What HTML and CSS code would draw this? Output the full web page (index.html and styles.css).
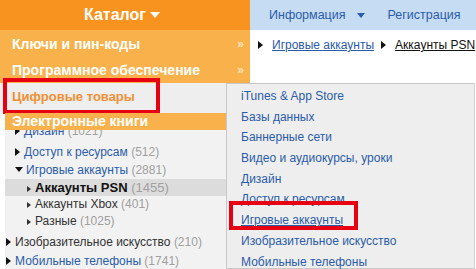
FILE: index.html
```html
<!DOCTYPE html>
<html lang="ru">
<head>
  <meta charset="UTF-8">
  <title>Каталог</title>
  <link rel="stylesheet" href="styles.css">
</head>
<body>
  <div class="page">
    <!-- Top bar -->
    <div class="topbar">
      <div class="catalog">Каталог <span class="caret"></span></div>
      <nav class="topnav">
        <a href="#">Информация <span class="caret-sm"></span></a>
        <a href="#">Регистрация</a>
      </nav>
    </div>

    <div class="midrow">
      <ul class="menu">
        <li>Ключи и пин-коды<span class="raquo">»</span></li>
        <li>Программное обеспечение<span class="raquo">»</span></li>
      </ul>
      <div class="crumbs">
        <span class="arrow"></span><a href="#" class="crumb-link">Игровые аккаунты</a>
        <span class="arrow"></span><a href="#" class="crumb-current">Аккаунты PSN</a>
      </div>
    </div>

    <div class="lower">
      <div class="side">
        <div class="current">Цифровые товары<span class="mark mark-left"></span></div>
        <div class="ebooks">Электронные книги</div>
        <ul class="tree">
          <li class="lvl1"><span class="arrow"></span><a href="#">Дизайн</a> <span class="count">(1021)</span></li>
          <li class="lvl1 gap"><span class="arrow"></span><a href="#">Доступ к ресурсам</a> <span class="count">(512)</span></li>
          <li class="lvl1"><span class="arrow-down"></span><a href="#">Игровые аккаунты</a> <span class="count">(2881)</span></li>
          <li class="lvl2 selected"><span class="arrow small"></span><b>Аккаунты PSN</b> <span class="count">(1455)</span></li>
          <li class="lvl2"><span class="arrow small"></span><span class="dark">Аккаунты Xbox</span> <span class="count">(401)</span></li>
          <li class="lvl2"><span class="arrow small"></span><span class="dark">Разные</span> <span class="count">(1025)</span></li>
          <li class="lvl0 tall"><span class="arrow"></span><span class="dark">Изобразительное искусство</span> <span class="count">(210)</span></li>
          <li class="lvl0"><span class="arrow"></span><a href="#">Мобильные телефоны</a> <span class="count">(1741)</span></li>
        </ul>
      </div>

      <ul class="dropdown">
        <li><a href="#">iTunes &amp; App Store</a></li>
        <li><a href="#">Базы данных</a></li>
        <li><a href="#">Баннерные сети</a></li>
        <li><a href="#">Видео и аудиокурсы, уроки</a></li>
        <li><a href="#">Дизайн</a></li>
        <li><a href="#">Доступ к ресурсам</a></li>
        <li class="marked"><a href="#" class="hover">Игровые аккаунты</a><span class="mark mark-right"></span></li>
        <li><a href="#">Изобразительное искусство</a></li>
        <li><a href="#">Мобильные телефоны</a></li>
      </ul>
    </div>
  </div>
</body>
</html>
```

FILE: styles.css
```css
body {
  margin: 0;
  font-family: "Liberation Sans", Arial, sans-serif;
  font-size: 12px;
  background: #fff;
}

a {
  text-decoration: none;
  color: #2b5ca8;
}

ul {
  list-style: none;
  margin: 0;
  padding: 0;
}

.page {
  width: 476px;
  height: 269px;
  overflow: hidden;
}

/* top bar */
.topbar {
  display: flex;
  height: 30px;
}

.catalog {
  width: 250px;
  background: #f7931e;
  color: #fff;
  font-weight: bold;
  font-size: 16px;
  display: flex;
  align-items: center;
  justify-content: center;
  gap: 4px;
  padding-right: 6px;
  box-sizing: border-box;
}

.caret {
  border-top: 6px solid #fff;
  border-left: 5px solid transparent;
  border-right: 5px solid transparent;
}

.topnav {
  flex: 1;
  background: #c6dcf3;
  display: flex;
  align-items: center;
  gap: 23px;
  padding-left: 19px;
  font-size: 12.5px;
  white-space: nowrap;
}

.topnav a {
  display: flex;
  align-items: center;
  gap: 11px;
}

.caret-sm {
  border-top: 5px solid #2b5ca8;
  border-left: 4px solid transparent;
  border-right: 4px solid transparent;
}

/* orange menu + breadcrumbs */
.midrow {
  display: flex;
  height: 53px;
}

.menu {
  width: 250px;
  flex-shrink: 0;
  background: #f9b14b;
  padding-top: 1px;
}

.menu li {
  height: 26px;
  line-height: 26px;
  padding-left: 12px;
  padding-right: 6px;
  color: #fff;
  font-weight: bold;
  font-size: 14px;
  display: flex;
  justify-content: space-between;
}

.raquo {
  color: #fde3bc;
  font-size: 12px;
}

.crumbs {
  flex: 1;
  display: flex;
  align-items: center;
  height: 30px;
  padding-left: 8px;
  gap: 5px;
  white-space: nowrap;
}

.crumb-link {
  text-decoration: underline;
  margin-right: 2px;
}

.crumb-current {
  color: #111;
  text-decoration: underline;
}

.arrow {
  display: inline-block;
  border-left: 5px solid #111;
  border-top: 4px solid transparent;
  border-bottom: 4px solid transparent;
  margin-right: 4px;
}

.arrow.small {
  border-left-width: 4px;
  border-top-width: 3px;
  border-bottom-width: 3px;
  border-left-color: #333;
}

.arrow-down {
  display: inline-block;
  border-top: 5px solid #111;
  border-left: 4px solid transparent;
  border-right: 4px solid transparent;
  margin-right: 3px;
  vertical-align: 2px;
}

/* lower area */
.lower {
  display: flex;
  height: 186px;
}

.side {
  width: 226px;
  flex-shrink: 0;
}

.current {
  position: relative;
  height: 30px;
  line-height: 27px;
  padding-left: 12px;
  background: #eee;
  color: #ef9036;
  font-weight: bold;
  font-size: 13px;
}

.mark {
  position: absolute;
  border: 4px solid #e60012;
  box-sizing: border-box;
}

.mark-left {
  left: 3px;
  top: -5px;
  width: 157px;
  height: 36px;
}

.ebooks {
  position: relative;
  z-index: 1;
  margin-left: 5px;
  height: 17px;
  line-height: 16px;
  padding-left: 7px;
  background: #f9b14b;
  color: #fff;
  font-weight: bold;
  font-size: 14px;
}

.tree {
  margin: -8px 0 0 5px;
  background: #f2f2f2;
  height: 160px;
}

.tree li {
  height: 18px;
  line-height: 18px;
  white-space: nowrap;
}

.tree li.gap {
  margin-top: 3px;
}

.tree li.lvl0 {
  padding-left: 1px;
}

.tree li.lvl1 {
  padding-left: 10px;
}

.tree li.lvl2 {
  padding-left: 22px;
  height: 17px;
  line-height: 17px;
}

.tree li.tall {
  margin-top: 2px;
  height: 20px;
  line-height: 20px;
}

.tree li.selected {
  background: #dcdcdc;
  color: #111;
  font-size: 13px;
}

.dark {
  color: #333;
}

.count {
  color: #a0a0a0;
}

/* dropdown */
.dropdown {
  flex: 1;
  background: #eee;
  border: 1px solid #c8c8c8;
  border-right-color: #d4d4d4;
  margin-right: 1px;
  padding: 2px 0 0 14px;
}

.dropdown li {
  height: 20.7px;
  line-height: 20.7px;
  position: relative;
}

.dropdown a.hover {
  text-decoration: underline;
}

.mark-right {
  left: -12px;
  top: -9px;
  width: 129px;
  height: 29px;
}
```
